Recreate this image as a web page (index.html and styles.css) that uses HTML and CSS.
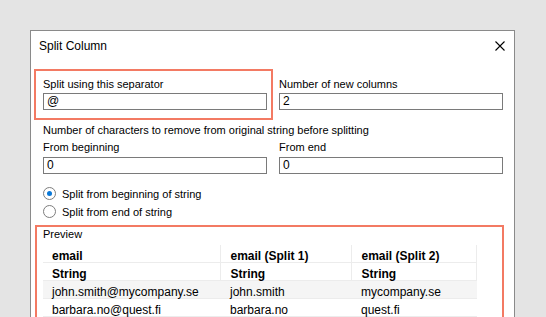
FILE: index.html
```html
<!DOCTYPE html>
<html lang="en">
<head>
    <meta charset="UTF-8">
    <meta name="viewport" content="width=device-width, initial-scale=1.0">
    <title>Split Column</title>
    <link rel="stylesheet" href="styles.css">
</head>
<body>
    <div class="dialog">
        <div class="titlebar">
            <span class="title">Split Column</span>
            <span class="close">
                <svg width="10" height="10" viewBox="0 0 10 10">
                    <path d="M0.5 0.5 L9.5 9.5 M9.5 0.5 L0.5 9.5" stroke="#000" stroke-width="1.1" fill="none"/>
                </svg>
            </span>
        </div>
        <div class="content">
            <div class="grid">
                <div class="field mark-sep">
                    <label>Split using this separator</label>
                    <div class="input">@</div>
                </div>
                <div class="field">
                    <label>Number of new columns</label>
                    <div class="input">2</div>
                </div>
            </div>

            <p class="note">Number of characters to remove from original string before splitting</p>
            <div class="grid grid-tight">
                <div class="field">
                    <label>From beginning</label>
                    <div class="input">0</div>
                </div>
                <div class="field">
                    <label>From end</label>
                    <div class="input">0</div>
                </div>
            </div>

            <div class="radios">
                <div class="radio checked"><span class="dot"></span>Split from beginning of string</div>
                <div class="radio"><span class="dot"></span>Split from end of string</div>
            </div>

            <div class="preview">
                <div class="preview-label">Preview</div>
                <table>
                    <tr class="head">
                        <td class="c1">email</td>
                        <td class="c2">email (Split 1)</td>
                        <td class="c3">email (Split 2)</td>
                    </tr>
                    <tr class="head">
                        <td>String</td>
                        <td>String</td>
                        <td>String</td>
                    </tr>
                    <tr class="row odd">
                        <td>john.smith@mycompany.se</td>
                        <td>john.smith</td>
                        <td>mycompany.se</td>
                    </tr>
                    <tr class="row">
                        <td>barbara.no@quest.fi</td>
                        <td>barbara.no</td>
                        <td>quest.fi</td>
                    </tr>
                </table>
            </div>
        </div>
    </div>
</body>
</html>
```

FILE: styles.css
```css
* {
    margin: 0;
    padding: 0;
    box-sizing: border-box;
}

html, body {
    height: 317px;
    overflow: hidden;
}

body {
    background: #e4e4e4;
    font-family: "Liberation Sans", Arial, sans-serif;
    color: #000;
    padding: 30px 0 0 30px;
}

.dialog {
    width: 485px;
    height: 287px;
    background: #fff;
    border: 1px solid #8a8a8a;
    border-bottom: none;
    overflow: hidden;
}

.titlebar {
    height: 30px;
    display: flex;
    align-items: center;
    justify-content: space-between;
    padding: 0 9px 0 8px;
}

.title {
    font-size: 12px;
}

.close {
    display: flex;
    width: 10px;
    height: 10px;
}

.content {
    padding: 16px 11px 0 12px;
    font-size: 11px;
}

.grid {
    display: grid;
    grid-template-columns: 1fr 1fr;
    column-gap: 12px;
}

.field {
    position: relative;
}

.field label {
    display: block;
    line-height: 14px;
    height: 14px;
}

.input {
    margin-top: 2px;
    height: 17px;
    border: 1px solid #7a7a7a;
    font-size: 12px;
    line-height: 15px;
    padding-left: 3px;
}

.mark-sep::after {
    content: "";
    position: absolute;
    top: -8px;
    left: -9px;
    right: -6px;
    bottom: -10px;
    border: 2px solid #f37a63;
}

.note {
    margin-top: 13px;
    line-height: 14px;
}

.grid-tight {
    margin-top: 3px;
}

.grid-tight .input {
    margin-top: 3px;
}

.radios {
    margin-top: 10px;
}

.radio {
    display: flex;
    align-items: center;
    height: 19px;
    font-size: 11px;
}

.radio + .radio {
    margin-top: -1px;
}

.radio .dot {
    width: 13px;
    height: 13px;
    border: 1px solid #7d7d7d;
    border-radius: 50%;
    margin-right: 6px;
    display: flex;
    align-items: center;
    justify-content: center;
}

.radio.checked .dot::after {
    content: "";
    width: 5px;
    height: 5px;
    border-radius: 50%;
    background: #0a78d7;
}

.preview {
    position: relative;
    margin-top: 6px;
    padding-bottom: 30px;
}

.preview::after {
    content: "";
    position: absolute;
    top: -2px;
    left: -8px;
    right: -1px;
    bottom: 0;
    border: 2px solid #f37a63;
}

.preview-label {
    line-height: 14px;
}

table {
    margin-top: 4px;
    width: 434px;
    border-collapse: collapse;
    font-size: 12px;
}

td {
    line-height: 12px;
    padding: 5px 9px 0;
    border-bottom: 1px solid #ececec;
    white-space: nowrap;
    vertical-align: top;
}

.c1 {
    width: 177px;
}

.c2 {
    width: 131px;
}

tr td:nth-child(2),
tr td:nth-child(3) {
    padding-left: 10px;
}

.head td {
    font-weight: bold;
    border-right: 1px solid #ececec;
}

.row.odd td {
    background: #f5f5f5;
}
```
